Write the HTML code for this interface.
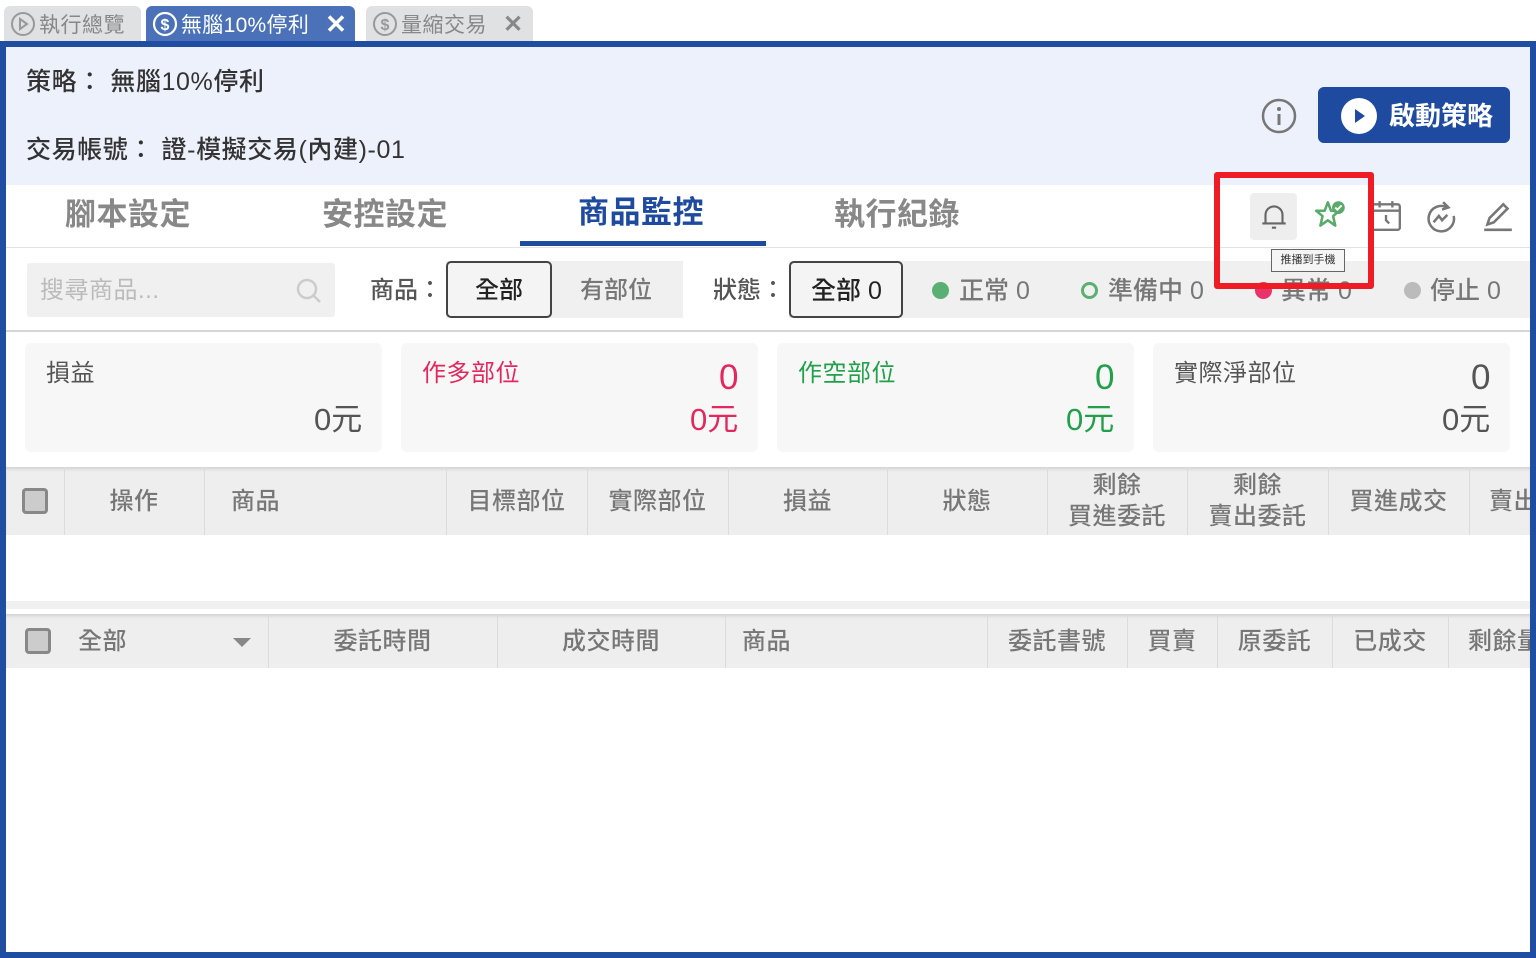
<!DOCTYPE html>
<html><head><meta charset="utf-8"><style>
*{margin:0;padding:0;box-sizing:border-box}
body{width:1536px;height:958px;position:relative;background:#fff;font-family:"Liberation Sans","Noto Sans CJK TC",sans-serif;overflow:hidden;color:#333}
.a{position:absolute}
.t{position:absolute;white-space:nowrap;line-height:1}
.tab{position:absolute;top:6px;height:36px;border-radius:6px 6px 0 0;font-size:21px;display:flex;align-items:center}
.c{position:absolute;top:343px;width:357px;height:109px;background:#f7f7f7;border-radius:6px}
.hd{position:absolute;background:#eee;box-shadow:inset 0 3px 3px -1px rgba(0,0,0,.12)}
.dv{position:absolute;top:0;bottom:0;width:1px;background:#dcdcdc}
.h{position:absolute;color:#777;font-size:24px;white-space:nowrap;line-height:1.3;text-align:center;font-weight:500;letter-spacing:0.5px}
</style></head><body>
<!-- tabs -->
<div class="tab" style="left:4px;width:137px;background:#e0e1e3;color:#888;padding-left:6px">
<svg width="26" height="26" viewBox="0 0 26 26"><circle cx="13" cy="13" r="11" fill="none" stroke="#999" stroke-width="2"/><path d="M10 8l7 5-7 5z" fill="none" stroke="#999" stroke-width="2"/></svg><span style="margin-left:3px;letter-spacing:0.5px">執行總覽</span></div>
<div class="tab" style="left:146px;width:209px;background:#4b72b9;color:#fff;padding-left:6px">
<svg width="26" height="26" viewBox="0 0 26 26"><circle cx="13" cy="13" r="11" fill="none" stroke="#fff" stroke-width="2.2"/><text x="13" y="19" font-size="16" text-anchor="middle" fill="#fff" font-weight="bold" font-family="Liberation Sans">$</text></svg><span style="margin-left:3px;letter-spacing:0.3px">無腦10%停利</span><span style="margin-left:16px;font-size:26px;font-weight:bold">✕</span></div>
<div class="tab" style="left:366px;width:167px;background:#e0e1e3;color:#888;padding-left:6px">
<svg width="26" height="26" viewBox="0 0 26 26"><circle cx="13" cy="13" r="11" fill="none" stroke="#999" stroke-width="2"/><text x="13" y="19" font-size="16" text-anchor="middle" fill="#999" font-weight="bold" font-family="Liberation Sans">$</text></svg><span style="margin-left:3px;letter-spacing:0.5px">量縮交易</span><span style="margin-left:16px;font-size:24px;font-weight:bold">✕</span></div>
<!-- frame -->
<div class="a" style="left:0;top:41px;width:1536px;height:917px;border:6px solid #1f4da1"></div>
<div class="a" style="left:6px;top:47px;width:1524px;height:138px;background:#ecf1fb"></div>
<div class="t" style="left:26px;top:70px;font-size:25px;color:#333;font-weight:500;letter-spacing:0.6px">策略： 無腦10%停利</div>
<div class="t" style="left:26px;top:138px;font-size:25px;color:#333;font-weight:500;letter-spacing:0.6px">交易帳號： 證-模擬交易(內建)-01</div>
<svg class="a" style="left:1261px;top:98px" width="36" height="36" viewBox="0 0 36 36"><circle cx="18" cy="18" r="16" fill="none" stroke="#777" stroke-width="2.5"/><circle cx="18" cy="11" r="2" fill="#777"/><path d="M18 16v11" stroke="#777" stroke-width="3"/></svg>
<div class="a" style="left:1318px;top:87px;width:192px;height:56px;background:#1e4ba0;border-radius:6px"></div>
<svg class="a" style="left:1340px;top:97px" width="38" height="38" viewBox="0 0 38 38"><circle cx="19" cy="19" r="18" fill="#fff"/><path d="M15 12l10 7-10 7z" fill="#1e4ba0"/></svg>
<div class="t" style="left:1389px;top:103px;font-size:26px;color:#fff;font-weight:bold">啟動策略</div>
<!-- main tabs -->
<div class="t" style="left:65px;top:199px;font-size:31px;color:#888;font-weight:bold;letter-spacing:0.5px">腳本設定</div>
<div class="t" style="left:322px;top:199px;font-size:31px;color:#888;font-weight:bold;letter-spacing:0.5px">安控設定</div>
<div class="t" style="left:578px;top:197px;font-size:31px;color:#1e4ba0;font-weight:bold;letter-spacing:0.5px">商品監控</div>
<div class="t" style="left:834px;top:199px;font-size:31px;color:#888;font-weight:bold;letter-spacing:0.5px">執行紀錄</div>
<div class="a" style="left:520px;top:241px;width:246px;height:5px;background:#1e4ba0"></div>
<div class="a" style="left:6px;top:247px;width:1524px;height:1px;background:#e3e3e3"></div>
<!-- icons -->
<div class="a" style="left:1250px;top:193px;width:47px;height:47px;background:#eee;border-radius:4px"></div>
<svg class="a" style="left:1257px;top:199px" width="34" height="34" viewBox="0 0 32 32" fill="none" stroke="#666" stroke-width="2"><path d="M8 23V15a8 8 0 0 1 16 0v8M5 23h22M14 27h4"/></svg>
<svg class="a" style="left:1313px;top:198px" width="36" height="34" viewBox="0 0 34 32"><path d="M14 4l3 8h8l-6 5 2 9-7-5-7 5 2-9-6-5h8z" fill="none" stroke="#5aaa6a" stroke-width="2.4" stroke-linejoin="round"/><circle cx="24" cy="9" r="6" fill="#5aaa6a"/><path d="M21 9l2 2 4-4" stroke="#fff" stroke-width="1.8" fill="none"/></svg>
<svg class="a" style="left:1369px;top:199px" width="34" height="34" viewBox="0 0 32 32" fill="none" stroke="#777" stroke-width="2.2"><rect x="3" y="5" width="26" height="24" rx="2"/><path d="M3 11h26M10 2v6M22 2v6M16 15v5l3 3"/></svg>
<svg class="a" style="left:1424px;top:199px" width="34" height="36" viewBox="0 0 32 34" fill="none" stroke="#777" stroke-width="2.4"><path d="M22 8a12 12 0 1 0 6 8M18 3l5 5-6 2"/><path d="M9 22l5-6 3 4 5-5"/></svg>
<svg class="a" style="left:1481px;top:199px" width="34" height="34" viewBox="0 0 32 32" fill="none" stroke="#777" stroke-width="2.4"><path d="M6 24l2-6 13-13 4 4-13 13z M3 29h26"/></svg>
<!-- filter row -->
<div class="a" style="left:27px;top:263px;width:308px;height:54px;background:#f0f0f0;border-radius:3px"></div>
<div class="t" style="left:40px;top:279px;font-size:24px;color:#bbb;letter-spacing:0.5px">搜尋商品...</div>
<svg class="a" style="left:294px;top:276px" width="30" height="30" viewBox="0 0 30 30" fill="none" stroke="#ccc" stroke-width="2.5"><circle cx="13" cy="13" r="9"/><path d="M20 20l6 6"/></svg>
<div class="t" style="left:370px;top:279px;font-size:24px;color:#555;font-weight:500">商品：</div>
<div class="a" style="left:446px;top:261px;width:237px;height:57px;background:#f0f0f0"></div>
<div class="a" style="left:446px;top:261px;width:106px;height:57px;border:2px solid #444;border-radius:5px;background:#f4f4f4"></div>
<div class="t" style="left:475px;top:279px;font-size:24px;color:#222;font-weight:500">全部</div>
<div class="t" style="left:580px;top:279px;font-size:24px;color:#777;font-weight:500">有部位</div>
<div class="t" style="left:713px;top:279px;font-size:24px;color:#555;font-weight:500">狀態：</div>
<div class="a" style="left:789px;top:261px;width:741px;height:57px;background:#f0f0f0"></div>
<div class="a" style="left:789px;top:261px;width:114px;height:57px;border:2px solid #444;border-radius:5px;background:#f4f4f4"></div>
<div class="t" style="left:811px;top:279px;font-size:25px;color:#222;font-weight:500">全部 0</div>
<div class="a" style="left:932px;top:282px;width:17px;height:17px;border-radius:50%;background:#5aaf72"></div>
<div class="t" style="left:959px;top:279px;font-size:25px;color:#777;font-weight:500">正常 0</div>
<div class="a" style="left:1081px;top:282px;width:17px;height:17px;border-radius:50%;border:3px solid #5aaf72"></div>
<div class="t" style="left:1108px;top:279px;font-size:25px;color:#777;font-weight:500">準備中 0</div>
<div class="a" style="left:1255px;top:282px;width:17px;height:17px;border-radius:50%;background:#e8336b"></div>
<div class="t" style="left:1281px;top:279px;font-size:25px;color:#777;font-weight:500">異常 0</div>
<div class="a" style="left:1404px;top:282px;width:17px;height:17px;border-radius:50%;background:#bbb"></div>
<div class="t" style="left:1430px;top:279px;font-size:25px;color:#777;font-weight:500">停止 0</div>
<!-- red box & tooltip -->
<div class="a" style="left:1214px;top:172px;width:160px;height:117px;border:6px solid #ee1c25;border-radius:3px"></div>
<div class="a" style="left:1271px;top:249px;width:74px;height:23px;border:1px solid #666;background:#f5f5f5;font-size:11px;color:#333;text-align:center;line-height:21px">推播到手機</div>
<div class="a" style="left:6px;top:330px;width:1524px;height:2px;background:#d6d6d6"></div>
<!-- cards -->
<div class="c" style="left:25px"></div><div class="c" style="left:401px"></div><div class="c" style="left:777px"></div><div class="c" style="left:1153px"></div>
<div class="t" style="left:46px;top:362px;font-size:24px;color:#555;letter-spacing:0.5px">損益</div>
<div class="t" style="left:314px;top:404px;font-size:31px;color:#555">0元</div>
<div class="t" style="left:422px;top:362px;font-size:24px;color:#e2285e;letter-spacing:0.5px">作多部位</div>
<div class="t" style="left:719px;top:360px;font-size:35px;color:#e2285e">0</div>
<div class="t" style="left:690px;top:404px;font-size:31px;color:#e2285e">0元</div>
<div class="t" style="left:798px;top:362px;font-size:24px;color:#22a04a;letter-spacing:0.5px">作空部位</div>
<div class="t" style="left:1095px;top:360px;font-size:35px;color:#22a04a">0</div>
<div class="t" style="left:1066px;top:404px;font-size:31px;color:#22a04a">0元</div>
<div class="t" style="left:1174px;top:362px;font-size:24px;color:#555;letter-spacing:0.5px">實際淨部位</div>
<div class="t" style="left:1471px;top:360px;font-size:35px;color:#555">0</div>
<div class="t" style="left:1442px;top:404px;font-size:31px;color:#555">0元</div>
<!-- table 1 -->
<div class="hd" style="left:6px;top:467px;width:1524px;height:68px">
<div class="dv" style="left:58px"></div><div class="dv" style="left:198px"></div><div class="dv" style="left:440px"></div><div class="dv" style="left:581px"></div><div class="dv" style="left:722px"></div><div class="dv" style="left:881px"></div><div class="dv" style="left:1041px"></div><div class="dv" style="left:1181px"></div><div class="dv" style="left:1322px"></div><div class="dv" style="left:1463px"></div>
<div class="a" style="left:16px;top:21px;width:26px;height:26px;border:3px solid #888;border-radius:4px;background:#ccc"></div>
<div class="h" style="left:58px;width:140px;top:19px">操作</div>
<div class="h" style="left:225px;top:19px">商品</div>
<div class="h" style="left:440px;width:141px;top:19px">目標部位</div>
<div class="h" style="left:581px;width:141px;top:19px">實際部位</div>
<div class="h" style="left:722px;width:159px;top:19px">損益</div>
<div class="h" style="left:881px;width:160px;top:19px">狀態</div>
<div class="h" style="left:1041px;width:140px;top:3px">剩餘<br>買進委託</div>
<div class="h" style="left:1181px;width:141px;top:3px">剩餘<br>賣出委託</div>
<div class="h" style="left:1322px;width:141px;top:19px">買進成交</div>
<div class="h" style="left:1483px;top:19px">賣出</div>
</div>
<div class="a" style="left:6px;top:601px;width:1524px;height:8px;background:#f0f0f0"></div>
<!-- table 2 -->
<div class="hd" style="left:6px;top:614px;width:1524px;height:54px">
<div class="dv" style="left:262px"></div><div class="dv" style="left:491px"></div><div class="dv" style="left:719px"></div><div class="dv" style="left:981px"></div><div class="dv" style="left:1121px"></div><div class="dv" style="left:1211px"></div><div class="dv" style="left:1326px"></div><div class="dv" style="left:1442px"></div>
<div class="a" style="left:19px;top:14px;width:26px;height:26px;border:3px solid #888;border-radius:4px;background:#ccc"></div>
<div class="h" style="left:72px;top:12px">全部</div>
<div class="a" style="left:227px;top:24px;width:0;height:0;border-left:9px solid transparent;border-right:9px solid transparent;border-top:9px solid #888"></div>
<div class="h" style="left:262px;width:229px;top:12px">委託時間</div>
<div class="h" style="left:491px;width:228px;top:12px">成交時間</div>
<div class="h" style="left:736px;top:12px">商品</div>
<div class="h" style="left:981px;width:140px;top:12px">委託書號</div>
<div class="h" style="left:1121px;width:90px;top:12px">買賣</div>
<div class="h" style="left:1211px;width:115px;top:12px">原委託</div>
<div class="h" style="left:1326px;width:116px;top:12px">已成交</div>
<div class="h" style="left:1462px;top:12px">剩餘量</div>
</div>
<div class="a" style="left:1530px;top:41px;width:6px;height:917px;background:#1f4da1"></div>
</body></html>
